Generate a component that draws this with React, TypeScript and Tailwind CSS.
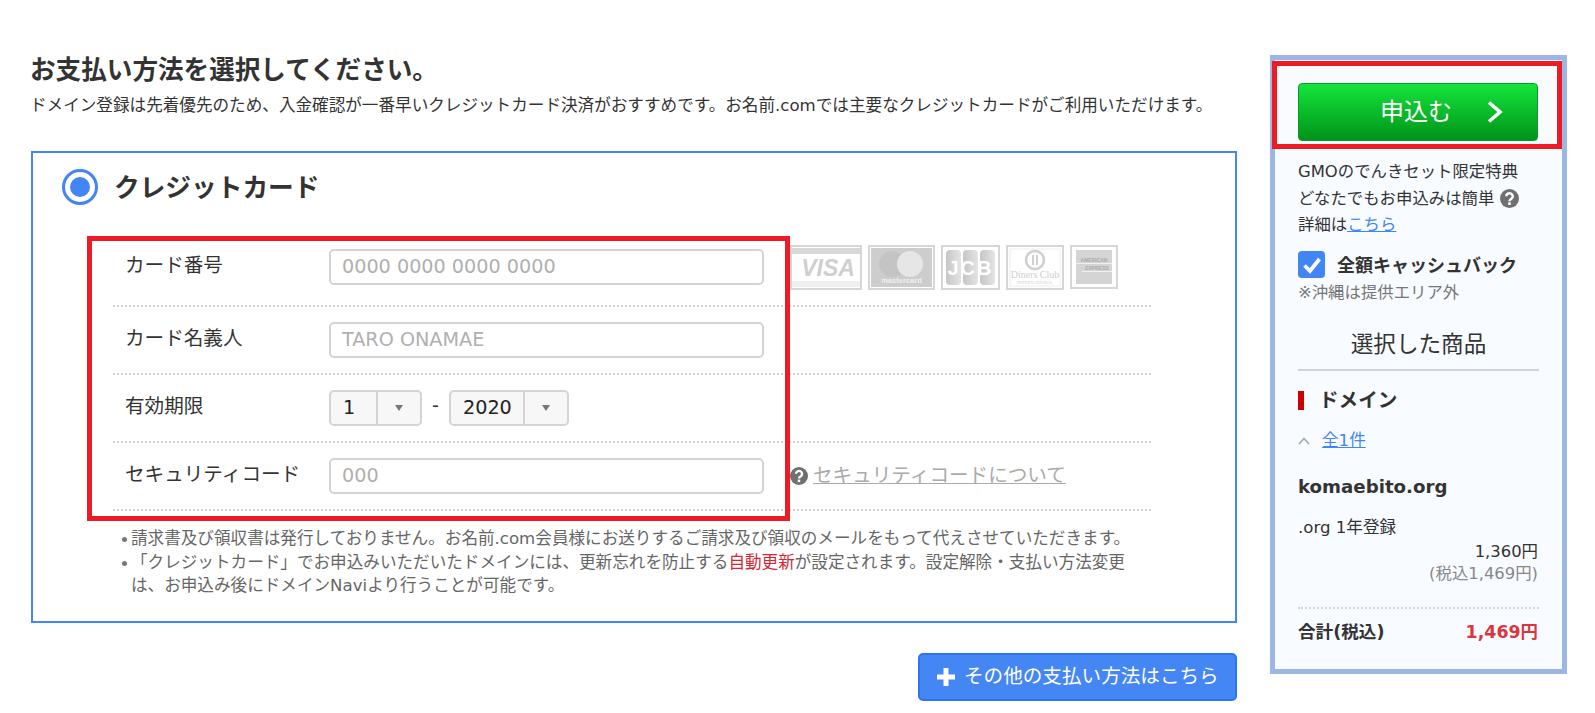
import React from "react";

const jp = `"DejaVu Sans", "Noto Sans CJK JP", sans-serif`;

function Help({ size, className }: { size: number; className?: string }) {
  return (
    <svg width={size} height={size} viewBox="0 0 20 20" className={className}>
      <circle cx="10" cy="10" r="10" fill="#6f6f6f" />
      <path d="M6.6 7.6a3.4 3.2 0 1 1 5.4 2.6c-1.2.8-2 1.3-2 2.6" fill="none" stroke="#fff" strokeWidth="2.6" />
      <rect x="8.6" y="14" width="2.8" height="2.8" fill="#fff" />
    </svg>
  );
}

function CardLogos() {
  return (
    <div className="flex items-start gap-[6px] ml-[26px] -mt-[4px]">
      <svg width="72" height="45" viewBox="0 0 72 45">
        <rect x="1" y="1" width="70" height="43" fill="#fff" stroke="#d6d6d6" strokeWidth="2" />
        <rect x="2" y="3" width="68" height="6" fill="#d8d8d8" />
        <rect x="2" y="36" width="68" height="6" fill="#efefef" />
        <text x="38" y="31" textAnchor="middle" fontFamily="Liberation Sans" fontWeight="700" fontStyle="italic" fontSize="23" fill="#cfcfcf">VISA</text>
      </svg>
      <svg width="67" height="45" viewBox="0 0 67 45">
        <rect x="1" y="1" width="65" height="43" fill="#fff" stroke="#d6d6d6" strokeWidth="2" />
        <rect x="3" y="3" width="61" height="39" fill="#cdcdcd" />
        <circle cx="24" cy="19" r="13" fill="#c4c4c4" />
        <circle cx="42" cy="19" r="13" fill="#e6e6e6" />
        <text x="33.500" y="38" textAnchor="middle" fontFamily="Liberation Sans" fontWeight="700" fontSize="7.500" fill="#f0f0f0">mastercard</text>
      </svg>
      <svg width="59" height="45" viewBox="0 0 59 45">
        <defs>
          <linearGradient id="jg" x1="0" x2="1" y1="0" y2="0">
            <stop offset="0" stopColor="#c6c6c6" />
            <stop offset="1" stopColor="#e4e4e4" />
          </linearGradient>
        </defs>
        <rect x="1" y="1" width="57" height="43" fill="#fff" stroke="#d6d6d6" strokeWidth="2" />
        <rect x="5" y="5" width="15" height="35" rx="4" fill="url(#jg)" />
        <rect x="22" y="5" width="15" height="35" rx="4" fill="url(#jg)" />
        <rect x="39" y="5" width="15" height="35" rx="4" fill="url(#jg)" />
        <text x="29.500" y="30" textAnchor="middle" fontFamily="Liberation Sans" fontWeight="700" fontSize="20" letterSpacing="2" fill="#fff">JCB</text>
      </svg>
      <svg width="58" height="45" viewBox="0 0 58 45">
        <rect x="1" y="1" width="56" height="43" fill="#fff" stroke="#d6d6d6" strokeWidth="2" />
        <rect x="4" y="4" width="50" height="37" fill="none" stroke="#eeeeee" />
        <circle cx="29" cy="15" r="9" fill="none" stroke="#cfcfcf" strokeWidth="2.500" />
        <rect x="26" y="10" width="2" height="10" fill="#cfcfcf" />
        <rect x="30" y="10" width="2" height="10" fill="#cfcfcf" />
        <text x="29" y="33" textAnchor="middle" fontFamily="Liberation Serif" fontSize="10" fill="#cfcfcf">Diners Club</text>
        <text x="29" y="39" textAnchor="middle" fontFamily="Liberation Serif" fontSize="4.500" fill="#cfcfcf">INTERNATIONAL</text>
      </svg>
      <svg width="48" height="44" viewBox="0 0 48 44">
        <rect x="1" y="1" width="46" height="42" fill="#fff" stroke="#d6d6d6" strokeWidth="2" />
        <rect x="6" y="5" width="36" height="34" fill="#d4d4d4" />
        <rect x="6" y="18" width="36" height="1" fill="#f0f0f0" />
        <rect x="12" y="26" width="30" height="1" fill="#f0f0f0" />
        <text x="24" y="17" textAnchor="middle" fontFamily="Liberation Sans" fontWeight="700" fontSize="5" fill="#ababab">AMERICAN</text>
        <text x="27" y="25" textAnchor="middle" fontFamily="Liberation Sans" fontWeight="700" fontSize="5" fill="#ababab">EXPRESS</text>
      </svg>
    </div>
  );
}

function Select({ value, w, left }: { value: string; w: string; left: string }) {
  return (
    <div className={`flex h-[36px] border-2 border-[#d4d4d4] rounded-[5px] bg-[#f7f7f7] ${w}`}>
      <div className={`${left} h-full border-r-2 border-[#d4d4d4] pl-[12px] text-[19.200px] leading-[32px] text-[#222]`}>{value}</div>
      <div className="flex-1 flex items-center justify-center">
        <svg width="10" height="8" viewBox="0 0 10 8"><path d="M1 1h8L5 7z" fill="#777" /></svg>
      </div>
    </div>
  );
}

const inputClass =
  "w-[435px] h-[36px] border-2 border-[#d4d4d4] rounded-[5px] bg-white pl-[11px] pr-[12px] pb-[2px] text-[19.200px] leading-[30px] outline-none placeholder:text-[#b0b0b0]";
const rowClass = "flex h-[68px] pl-[12px] border-b-2 border-dotted border-[#d2d2d2]";
const labelClass = "w-[204px] h-[36px] text-[19.600px] leading-[34px] text-[#333]";

export default function App() {
  return (
    <div className="relative w-[1595px] h-[713px] bg-white overflow-hidden flex items-start text-[#333]" style={{ fontFamily: jp }}>
      <main className="ml-[31px] w-[1206px] pt-[50px]">
        <h1 className="text-[25.600px] leading-[40px] font-bold text-[#333] whitespace-nowrap -ml-[1px]">お支払い方法を選択してください。</h1>
        <p className="mt-[4px] text-[16.600px] leading-[24px] text-[#333] whitespace-nowrap -ml-[1px]">
          ドメイン登録は先着優先のため、入金確認が一番早いクレジットカード決済がおすすめです。お名前.comでは主要なクレジットカードがご利用いただけます。
        </p>

        <section className="mt-[33px] h-[472px] border-2 border-[#4285f4]">
          <div className="flex items-center h-[85px] pb-[18px] pl-[29px]">
            <span className="flex items-center justify-center w-[36px] h-[36px] rounded-full border-[3px] border-[#4285f4] bg-white">
              <span className="w-[20px] h-[20px] rounded-full bg-[#4285f4]" />
            </span>
            <span className="ml-[16px] text-[25.700px] font-bold leading-[36px] text-[#333] pt-[2px]">クレジットカード</span>
          </div>

          <div className="ml-[80px] w-[1038px] pt-[1px]">
            <div className={`${rowClass} pt-[10px]`}>
              <div className={labelClass}>カード番号</div>
              <input readOnly placeholder="0000 0000 0000 0000" className={inputClass} />
              <CardLogos />
            </div>
            <div className={`${rowClass} pt-[15px]`}>
              <div className={labelClass}>カード名義人</div>
              <input readOnly placeholder="TARO ONAMAE" className={inputClass} />
            </div>
            <div className={`${rowClass} pt-[15px]`}>
              <div className={labelClass}>有効期限</div>
              <Select value="1" w="w-[93px]" left="w-[47px]" />
              <span className="w-[27px] text-center text-[19px] leading-[31px]">-</span>
              <Select value="2020" w="w-[120px]" left="w-[74px]" />
            </div>
            <div className={`${rowClass} pt-[15px]`}>
              <div className={labelClass}>セキュリティコード</div>
              <input readOnly placeholder="000" className={inputClass} />
              <div className="flex items-center h-[36px] ml-[26px]">
                <Help size={18} />
                <a className="ml-[5px] text-[19.600px] text-[#aaa] underline whitespace-nowrap">セキュリティコードについて</a>
              </div>
            </div>
          </div>

          <ul className="mt-[16px] ml-[89px] w-[1010px] text-[16.600px] leading-[23.500px] text-[#666]">
            <li className="relative pl-[9px] whitespace-nowrap">
              <span className="absolute left-0 top-[10px] w-[5px] h-[5px] rounded-full bg-[#777]" />
              請求書及び領収書は発行しておりません。お名前.com会員様にお送りするご請求及び領収のメールをもって代えさせていただきます。
            </li>
            <li className="relative pl-[9px]">
              <span className="absolute left-0 top-[10px] w-[5px] h-[5px] rounded-full bg-[#777]" />
              「クレジットカード」でお申込みいただいたドメインには、更新忘れを防止する<span className="text-[#d8262e]">自動更新</span>が設定されます。設定解除・支払い方法変更は、お申込み後にドメインNaviより行うことが可能です。
            </li>
          </ul>
        </section>

        <div className="flex justify-end mt-[30px]">
          <button className="flex items-center w-[319px] h-[48px] pl-[16px] rounded-[5px] border-2 border-[#2b74f2] bg-[#4586f5] text-white text-[19.600px] whitespace-nowrap">
            <svg width="20" height="20" viewBox="0 0 20 20" className="mr-[8px]"><path d="M7.500 1h5v6.500H19v5h-6.500V19h-5v-6.500H1v-5h6.500z" fill="#fff" /></svg>
            その他の支払い方法はこちら
          </button>
        </div>
      </main>

      <aside className="ml-[33px] mt-[55px] w-[297px] h-[619px] border-[5px] border-[#9db7e4] bg-[#f8fbff] px-[23px] pt-[23px]">
        <button className="relative flex items-center w-[240px] h-[58px] rounded-[4px] border border-[#0a9a2a] bg-gradient-to-b from-[#15e63b] to-[#01931a] text-white text-[24px]">
          <span className="ml-[81px]">申込む</span>
          <svg width="16" height="22" viewBox="0 0 16 22" className="ml-[35px]"><path d="M2 1.500L13 11 2 20.500" fill="none" stroke="#fff" strokeWidth="3.500" /></svg>
        </button>

        <div className="mt-[18px] text-[16.400px] leading-[26.500px] text-[#333]">
          <div className="whitespace-nowrap">GMOのでんきセット限定特典</div>
          <div className="flex items-center whitespace-nowrap">
            どなたでもお申込みは簡単<Help size={19} className="ml-[6px]" />
          </div>
          <div>詳細は<a className="text-[#4285f4] underline">こちら</a></div>
        </div>

        <div className="flex items-center mt-[12px]">
          <span className="flex items-center justify-center w-[27px] h-[27px] rounded-[4px] bg-[#4285f4]">
            <svg width="20" height="18" viewBox="0 0 20 18"><path d="M2.500 9.500l5.500 5.500L17.500 3" fill="none" stroke="#fff" strokeWidth="3.800" /></svg>
          </span>
          <span className="ml-[12px] pt-[1px] text-[18px] font-bold leading-[27px] whitespace-nowrap">全額キャッシュバック</span>
        </div>
        <div className="mt-[2px] text-[16.400px] leading-[24px] text-[#777] whitespace-nowrap">※沖縄は提供エリア外</div>

        <h2 className="mt-[21px] pb-[7px] border-b-2 border-[#d2d2d6] text-center text-[22.600px] leading-[36px] text-[#333]">選択した商品</h2>

        <div className="flex items-center mt-[17px]">
          <span className="w-[6px] h-[19px] bg-[#cc0000]" />
          <span className="ml-[15px] text-[19.600px] font-bold leading-[26px]">ドメイン</span>
        </div>

        <div className="flex items-center mt-[15px]">
          <svg width="12" height="8" viewBox="0 0 12 8"><path d="M1 7l5-5.500L11 7" fill="none" stroke="#aaa" strokeWidth="1.800" /></svg>
          <a className="ml-[12px] text-[16.600px] leading-[24px] text-[#4285f4] underline">全1件</a>
        </div>

        <div className="mt-[19px] text-[18.200px] font-bold leading-[30px] text-[#333]">komaebito.org</div>
        <div className="mt-[14px] text-[16.600px] leading-[24px]">.org 1年登録</div>
        <div className="text-right pr-[1px] text-[16.400px] leading-[23px]">1,360円</div>
        <div className="text-right pr-[1px] text-[16.400px] leading-[22.500px] text-[#888]">(税込1,469円)</div>
        <div className="flex items-center justify-between mt-[22px] pt-[10px] pr-[1px] border-t-2 border-dotted border-[#d4d4d4]">
          <span className="text-[17.600px] font-bold leading-[26px]">合計(税込)</span>
          <span className="text-[17.400px] font-bold leading-[26px] text-[#d9363e]">1,469円</span>
        </div>
      </aside>

      <div className="absolute left-[87px] top-[236px] w-[703px] h-[285px] border-[5px] border-[#ed1c24] pointer-events-none" />
      <div className="absolute left-[1272px] top-[61px] w-[290px] h-[88px] border-[5px] border-[#ed1c24] pointer-events-none" />
    </div>
  );
}
